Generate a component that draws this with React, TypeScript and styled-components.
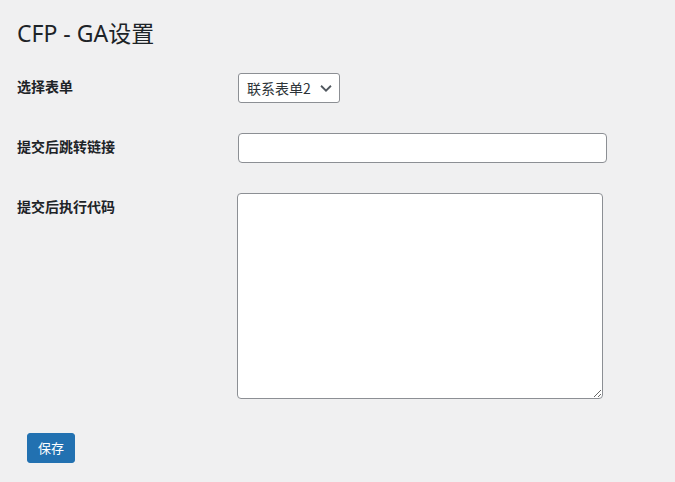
import React, { useState } from 'react';
import styled, { createGlobalStyle } from 'styled-components';

const GlobalStyle = createGlobalStyle`
  html, body {
    margin: 0;
    padding: 0;
    background: #f0f0f1;
  }

  body {
    font-family: "Noto Sans", "Noto Sans CJK SC", sans-serif;
    color: #1d2327;
  }

  * {
    box-sizing: border-box;
  }
`;

const App = () => {
  const [form, setForm] = useState('2');
  const [redirect, setRedirect] = useState('');
  const [code, setCode] = useState('');

  return (
    <Wrap>
      <GlobalStyle />
      <Title>CFP - GA设置</Title>

      <FormTable>
        <Row>
          <Label>选择表单</Label>
          <Field>
            <SelectBox>
              <Select value={form} onChange={(e) => setForm(e.target.value)}>
                <option value="1">联系表单1</option>
                <option value="2">联系表单2</option>
              </Select>
              <Chevron viewBox="0 0 20 20" aria-hidden>
                <path
                  d="M4.5 7.5l5.5 5.5 5.5-5.5"
                  fill="none"
                  stroke="#50575e"
                  strokeWidth="2"
                />
              </Chevron>
            </SelectBox>
          </Field>
        </Row>

        <Row>
          <Label>提交后跳转链接</Label>
          <Field>
            <TextInput
              type="text"
              value={redirect}
              onChange={(e) => setRedirect(e.target.value)}
            />
          </Field>
        </Row>

        <Row>
          <Label>提交后执行代码</Label>
          <Field>
            <CodeArea value={code} onChange={(e) => setCode(e.target.value)} />
          </Field>
        </Row>
      </FormTable>

      <Submit type="button">保存</Submit>
    </Wrap>
  );
};

export default App;

const Wrap = styled.div`
  padding: 17px 0 20px 17px;
  min-height: 482px;
`;

const Title = styled.h1`
  margin: 0;
  font-size: 23px;
  font-weight: 400;
  line-height: 32px;
  color: #1d2327;
`;

const FormTable = styled.div`
  margin-top: 9px;
  display: flex;
  flex-direction: column;
`;

const Row = styled.div`
  display: grid;
  grid-template-columns: 221px 1fr;
  align-items: start;
`;

const Label = styled.div`
  padding: 20px 10px 20px 0;
  font-size: 14px;
  font-weight: 700;
  line-height: 18px;
  color: #1d2327;
`;

const Field = styled.div`
  padding: 15px 0;
  display: flex;
`;

const SelectBox = styled.div`
  position: relative;
  width: 102px;
  height: 30px;
`;

const Select = styled.select`
  appearance: none;
  width: 100%;
  height: 100%;
  padding: 0 24px 0 8px;
  border: 1px solid #8c8f94;
  border-radius: 3px;
  background: #fff;
  font-family: "Noto Sans CJK SC", "Noto Sans", sans-serif;
  font-size: 14px;
  color: #2c3338;
  outline: none;
`;

const Chevron = styled.svg`
  position: absolute;
  right: 5px;
  top: 6px;
  width: 18px;
  height: 18px;
  pointer-events: none;
`;

const TextInput = styled.input`
  width: 369px;
  height: 30px;
  padding: 0 8px;
  border: 1px solid #8c8f94;
  border-radius: 4px;
  background: #fff;
  font-size: 14px;
  outline: none;
`;

const CodeArea = styled.textarea`
  width: 366px;
  height: 206px;
  margin-left: -1px;
  padding: 2px 6px;
  border: 1px solid #8c8f94;
  border-radius: 4px;
  background: #fff;
  font-size: 14px;
  outline: none;
`;

const Submit = styled.button`
  display: block;
  margin: 19px 0 0 10px;
  height: 30px;
  padding: 0 10px;
  border: 1px solid #2271b1;
  border-radius: 3px;
  background: #2271b1;
  color: #fff;
  font-family: "Noto Sans CJK SC", "Noto Sans", sans-serif;
  font-size: 13px;
  line-height: 28px;
  cursor: pointer;
`;
